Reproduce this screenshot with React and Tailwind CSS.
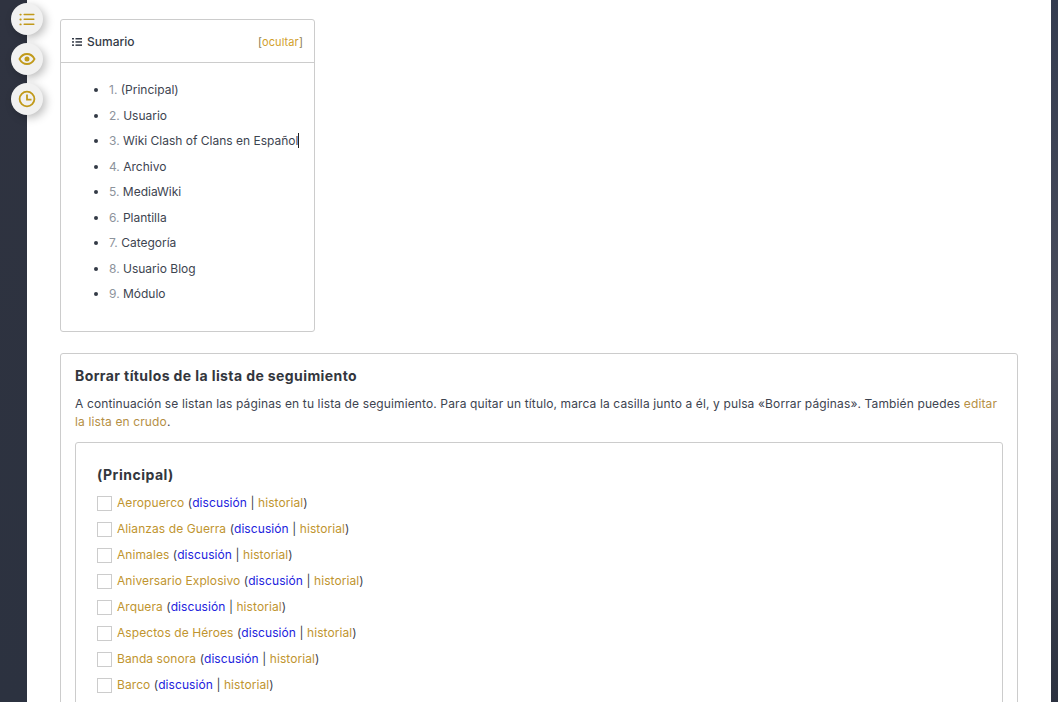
import React from "react";

const rows = [
  "Aeropuerco", "Alianzas de Guerra", "Animales", "Aniversario Explosivo",
  "Arquera", "Aspectos de Héroes", "Banda sonora", "Barco",
];
const toc = [
  ["1.", "(Principal)"], ["2.", "Usuario"], ["3.", "Wiki Clash of Clans en Español"], ["4.", "Archivo"],
  ["5.", "MediaWiki"], ["6.", "Plantilla"], ["7.", "Categoría"], ["8.", "Usuario Blog"], ["9.", "Módulo"],
];

function Fab({ top, children }) {
  return (
    <div style={{ top }} className="absolute left-[11px] w-8 h-8 rounded-full bg-[#f1f1f1] shadow-[3px_3px_8px_rgba(0,0,0,0.25)] flex items-center justify-center">
      {children}
    </div>
  );
}

export default function App() {
  return (
    <div className="relative h-[702px] w-[1058px] overflow-hidden flex bg-[#2d3340] font-['Inter','Liberation_Sans',sans-serif] text-[#3a3a3a]">
      <div className="w-[27px] shrink-0 bg-gradient-to-b from-[#2f3340] to-[#2c3240]" />
      <main className="w-[1024px] shrink-0 bg-white pl-[33px] pr-[33px] pt-[19px]">
        <section className="w-[255px] h-[313px] border border-[#cccccc] rounded-[3px]">
          <div className="h-[43px] border-b border-[#cccccc] pl-[11px] pr-[11px] pt-[2px] flex items-center justify-between">
            <div className="flex items-center gap-[5px]">
              <svg width="10" height="10" viewBox="0 0 10 10" fill="#333a46">
                <rect x="0" y="1" width="2" height="1.5" /><rect x="3.5" y="1" width="6.5" height="1.5" />
                <rect x="0" y="4.2" width="2" height="1.5" /><rect x="3.5" y="4.2" width="6.5" height="1.5" />
                <rect x="0" y="7.4" width="2" height="1.5" /><rect x="3.5" y="7.4" width="6.5" height="1.5" />
              </svg>
              <span className="text-[12px] font-medium text-[#333a46]">Sumario</span>
            </div>
            <span className="text-[11px] tracking-[0.1px] text-[#d1a02c]"><span className="text-[#8a7a4a]">[</span>ocultar<span className="text-[#8a7a4a]">]</span></span>
          </div>
          <ul className="pl-[48px] pt-[14px] list-disc text-[12px] leading-[25.5px] text-[#3d4450] marker:text-[#333a46]">
            {toc.map(([n, t], i) => (
              <li key={n}>
                <span className="text-[#8d939c]">{n}</span> {t}
                {i === 2 && <span className="inline-block w-px h-[15px] bg-[#222] align-[-3px]" />}
              </li>
            ))}
          </ul>
        </section>

        <section className="mt-[21px] h-[400px] border border-[#cccccc] rounded-[3px] pl-[14px] pr-[14px] pt-[13px]">
          <h2 className="text-[14px] leading-[18px] font-bold tracking-[0.4px] text-[#33363d]">Borrar títulos de la lista de seguimiento</h2>
          <p className="mt-[10px] text-[12px] leading-[18px] tracking-[0.125px] text-[#3d4450]">
            A continuación se listan las páginas en tu lista de seguimiento. Para quitar un título, marca la casilla junto a él, y pulsa «Borrar páginas». También puedes <span className="text-[#b58f45]">editar la lista en crudo</span>.
          </p>
          <div className="mt-[11px] h-[300px] border border-[#cccccc] rounded-[3px] pl-[21px] pt-[23px]">
            <h3 className="text-[14px] leading-[18px] font-bold tracking-[0.5px] text-[#33363d] mb-[6px]">(Principal)</h3>
            <ul className="text-[12px] tracking-[0.08px]">
              {rows.map((r) => (
                <li key={r} className="h-[26px] flex items-center gap-[5px]">
                  <span className="w-[15px] h-[15px] border border-[#cccccc] shrink-0" />
                  <span className="text-[#3d4450]">
                    <span className="text-[#bf952f]">{r}</span> (<span className="text-[#2222dd]">discusión</span> | <span className="text-[#bf952f]">historial</span>)
                  </span>
                </li>
              ))}
            </ul>
          </div>
        </section>
      </main>
      <div className="flex-1 bg-gradient-to-b from-[#343c50] via-[#4a4d5c] to-[#2c3240]" />

      <Fab top={3}>
        <svg width="16" height="15" viewBox="0 0 18 16" fill="#c19a1b">
          <rect x="0.5" y="1.5" width="2.5" height="2" rx="1" /><rect x="5" y="1.5" width="12.5" height="1.6" rx="0.8" />
          <rect x="0.5" y="7" width="2.5" height="2" rx="1" /><rect x="5" y="7" width="12.5" height="1.6" rx="0.8" />
          <rect x="0.5" y="12.5" width="2.5" height="2" rx="1" /><rect x="5" y="12.5" width="12.5" height="1.6" rx="0.8" />
        </svg>
      </Fab>
      <Fab top={43}>
        <svg width="18" height="18" viewBox="0 0 18 18" fill="none" stroke="#c19a1b" strokeWidth="1.8">
          <path d="M1.5 9c1.8-3.4 4.4-5 7.5-5s5.7 1.6 7.5 5c-1.8 3.4-4.4 5-7.5 5s-5.700-1.600-7.500-5z" />
          <circle cx="9" cy="9" r="1.6" fill="#c19a1b" />
        </svg>
      </Fab>
      <Fab top={83}>
        <svg width="18" height="18" viewBox="0 0 18 18" fill="none" stroke="#c19a1b" strokeWidth="1.8">
          <circle cx="9" cy="9" r="7.4" />
          <path d="M9 4.500V9.600H13.500" />
        </svg>
      </Fab>
    </div>
  );
}
